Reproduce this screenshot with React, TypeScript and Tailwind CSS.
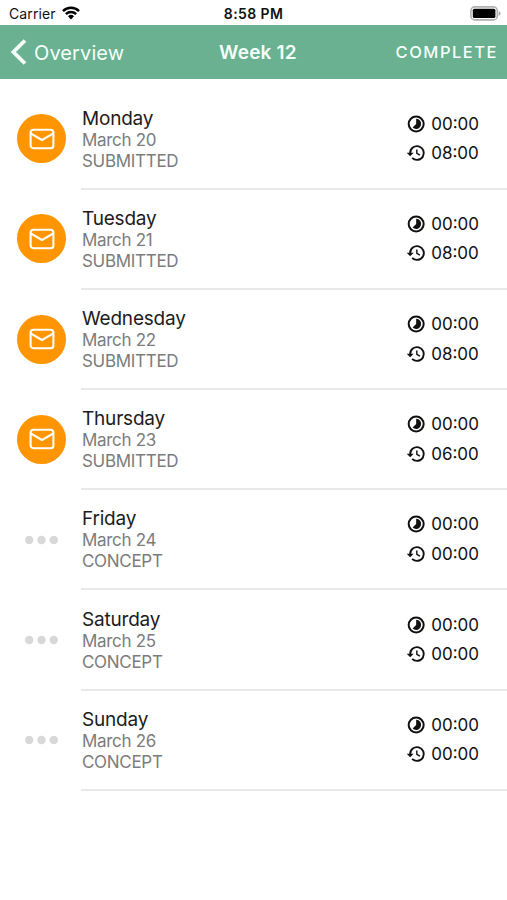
import React from "react";

type Day = { name: string; date: string; submitted: boolean; total: string };

const days: Day[] = [
  { name: "Monday", date: "March 20", submitted: true, total: "08:00" },
  { name: "Tuesday", date: "March 21", submitted: true, total: "08:00" },
  { name: "Wednesday", date: "March 22", submitted: true, total: "08:00" },
  { name: "Thursday", date: "March 23", submitted: true, total: "06:00" },
  { name: "Friday", date: "March 24", submitted: false, total: "00:00" },
  { name: "Saturday", date: "March 25", submitted: false, total: "00:00" },
  { name: "Sunday", date: "March 26", submitted: false, total: "00:00" },
];

function StatusBar() {
  return (
    <div className="grid h-[25px] grid-cols-3 items-center pt-[3px] text-[#111]">
      <div className="flex items-center gap-[6px] pl-[9px]">
        <span className="text-[14px] leading-none tracking-[0.1px]">Carrier</span>
        <svg className="-mt-[2px]" width="18" height="14" viewBox="0 0 18 14" fill="none" stroke="#000" strokeWidth="2.5">
          <path d="M1 5.1a11.4 11.4 0 0 1 16 0" />
          <path d="M3.9 8.2a7.3 7.3 0 0 1 10.2 0" />
          <path d="M6 10.3a4.3 4.3 0 0 1 6 0L9 13.5Z" fill="#000" stroke="none" />
        </svg>
      </div>
      <span className="text-center text-[14px] leading-none font-semibold tracking-[0.4px]">8:58 PM</span>
      <div className="flex justify-end pr-[6px]">
        <svg className="-mt-[2px]" width="31" height="15" viewBox="0 0 31 15">
          <rect x="0.9" y="0.9" width="26.4" height="13" rx="4" fill="#fff" stroke="#b0b0b0" strokeWidth="1.6" />
          <rect x="2.8" y="2.7" width="22.6" height="9.4" rx="1.6" fill="#000" />
          <path d="M28.6 5.2c1.2.4 2 1.2 2 2.3s-.8 1.9-2 2.3Z" fill="#aaa" />
        </svg>
      </div>
    </div>
  );
}

function Header() {
  return (
    <header className="grid h-[54px] grid-cols-3 items-center bg-[#69b190] pt-px text-[#f5fff9]">
      <div className="flex items-center gap-[7px] pl-[10px]">
        <svg className="-mt-px" width="17" height="26" viewBox="0 0 17 26" fill="none" stroke="currentColor" strokeWidth="3.8">
          <path d="M15 1.5 3.4 13 15 24.5" />
        </svg>
        <span className="text-[20px] leading-none tracking-[0.1px]">Overview</span>
      </div>
      <h1 className="pl-[9px] text-center text-[19px] leading-none font-semibold tracking-[0.2px]">Week 12</h1>
      <span className="pr-[9px] text-right text-[16.5px] leading-none font-medium tracking-[1.5px]">COMPLETE</span>
    </header>
  );
}

function StatusIcon({ submitted }: { submitted: boolean }) {
  if (submitted) {
    return (
      <div className="flex size-[49px] items-center justify-center rounded-full bg-[#ff9500]">
        <svg width="26" height="22" viewBox="0 0 26 22" fill="none" stroke="#fff" strokeWidth="2.1" strokeLinejoin="round">
          <rect x="1.6" y="1.8" width="22.8" height="18.4" rx="2.8" />
          <path d="M2 5.6 13 12 24 5.6" />
        </svg>
      </div>
    );
  }
  return (
    <svg className="w-[49px]" height="10" viewBox="0 0 49 10" fill="#d8d8d8">
      <circle cx="12.2" cy="5" r="4.2" />
      <circle cx="24.5" cy="5" r="4.2" />
      <circle cx="36.8" cy="5" r="4.2" />
    </svg>
  );
}

function TimelapseIcon() {
  return (
    <svg width="20" height="20" viewBox="0 0 24 24" fill="currentColor">
      <circle cx="12.2" cy="12" r="9" fill="none" stroke="currentColor" strokeWidth="2.4" />
      <path d="M12.2 5.8V12L7.9 16.3a6.1 6.1 0 1 0 4.3-10.5Z" />
    </svg>
  );
}

function HistoryIcon() {
  return (
    <svg width="20" height="20" viewBox="0 0 24 24" fill="none" stroke="currentColor">
      <path d="M5 12a8.2 8.2 0 1 1 2.4 5.8" strokeWidth="2.3" />
      <path d="M.8 11.6h8.400L5 16Z" fill="currentColor" stroke="none" />
      <path d="M13 7.800v4.600l3.700 2.200" strokeWidth="1.700" />
    </svg>
  );
}

function DayRow({ day }: { day: Day }) {
  return (
    <li className="flex h-[100.2px] pl-[17px]">
      <div className="flex w-[63.5px] shrink-0 items-center pb-[1.400px]">
        <StatusIcon submitted={day.submitted} />
      </div>
      <div className="flex grow items-center justify-between border-b-2 border-[#e9e9eb] pr-[28px] pl-[1.5px]">
        <div className="pt-[1.4px] text-[17px] leading-[21px] tracking-[-0.3px] text-[#7c7c7c]">
          <div className="text-[19px] leading-[23px] tracking-[-0.2px] text-[#1c1c1c]">{day.name}</div>
          <div>{day.date}</div>
          <div>{day.submitted ? "SUBMITTED" : "CONCEPT"}</div>
        </div>
        <div className="flex flex-col gap-[9.5px] text-[17px] leading-[20px] text-[#111]">
          <div className="flex items-center gap-[5px]">
            <TimelapseIcon />
            <span>00:00</span>
          </div>
          <div className="flex items-center gap-[5px]">
            <HistoryIcon />
            <span>{day.total}</span>
          </div>
        </div>
      </div>
    </li>
  );
}

export default function App() {
  return (
    <div className="h-[900px] w-[507px] overflow-hidden bg-white font-['Inter','Liberation_Sans',sans-serif]">
      <StatusBar />
      <Header />
      <ul className="pt-[10.4px]">
        {days.map((day) => (
          <DayRow key={day.name} day={day} />
        ))}
      </ul>
    </div>
  );
}
